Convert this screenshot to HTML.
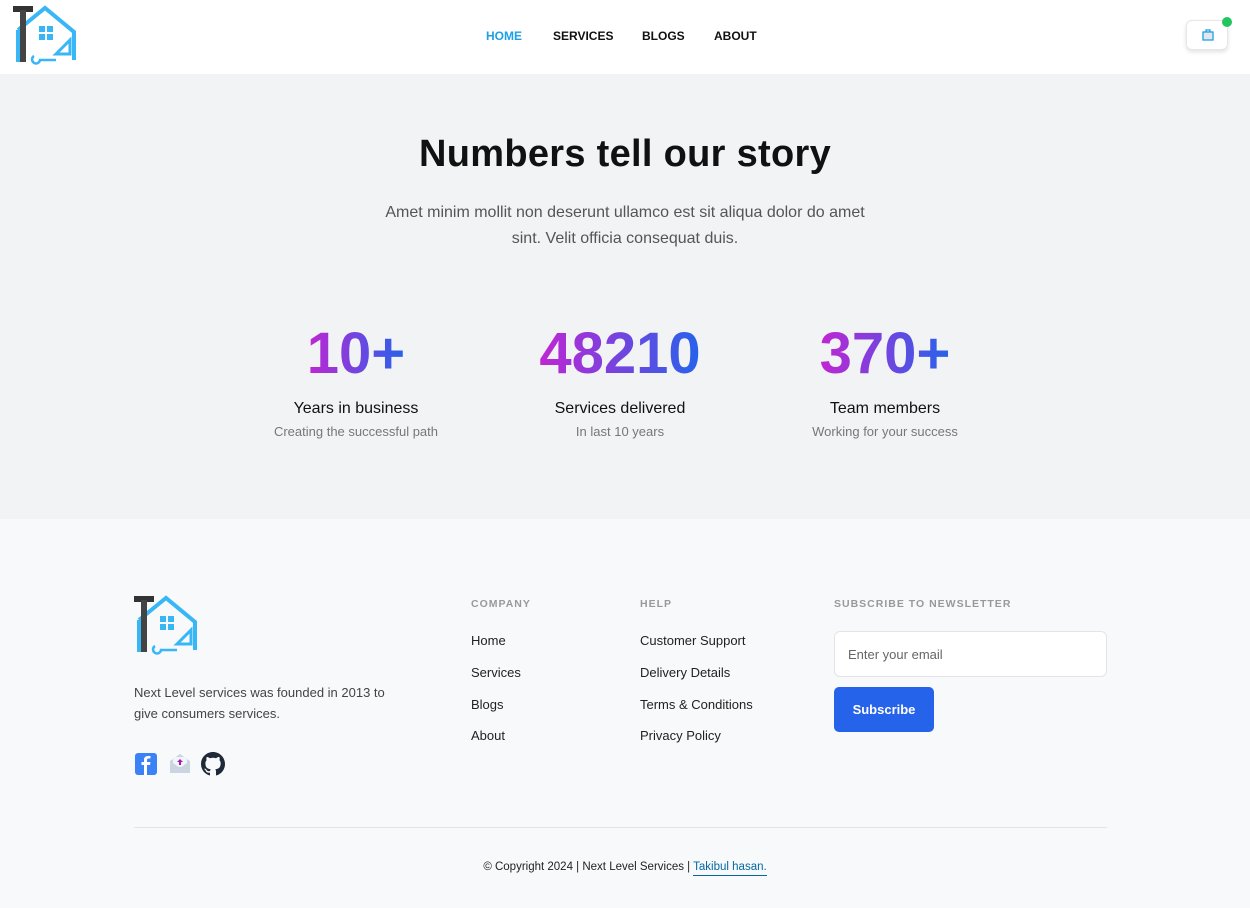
<!DOCTYPE html>
<html><head><meta charset="utf-8"><style>
*{margin:0;padding:0;box-sizing:border-box}
body{width:1250px;height:908px;overflow:hidden;font-family:"Liberation Sans",sans-serif;background:#f8f9fb;color:#111}
header{height:74px;background:#fff;position:relative}
nav{position:absolute;top:29px;left:486px;font-size:12px;font-weight:bold}
nav span{position:absolute;white-space:nowrap}
.cart{position:absolute;left:1186px;top:20px;width:42px;height:30px;border:1px solid #e5e7eb;border-radius:6px;background:#fff;box-shadow:0 2px 4px rgba(0,0,0,.12)}
.dot{position:absolute;left:1222px;top:17px;width:10px;height:10px;border-radius:50%;background:#22c55e}
.stats{position:absolute;top:74px;left:0;width:1250px;height:445px;background:#f2f3f5}
h1{position:absolute;top:133px;width:1250px;text-align:center;font-size:38px;font-weight:bold;letter-spacing:0.3px}
.sub{position:absolute;top:200px;left:370px;width:510px;text-align:center;font-size:16px;line-height:26px;color:#555}
.stat{position:absolute;top:322px;width:300px;text-align:center}
.num{display:inline-block;font-size:58px;font-weight:bold;background:linear-gradient(90deg,#c026d3,#2563eb);-webkit-background-clip:text;background-clip:text;color:transparent;line-height:64px}
.t{font-size:16px;margin-top:14px;color:#111}
.d{font-size:13px;color:#777;margin-top:6px}
.fh{position:absolute;top:598px;font-size:10.5px;font-weight:bold;color:#999;letter-spacing:1px}
.fl{position:absolute;font-size:13px;color:#222}
</style></head><body>
<header>
<svg style="position:absolute;left:12px;top:4px" width="66" height="62" viewBox="0 0 66 62">
<path d="M6 26 L33 4 L62 28 L62 56 M6 26 L6 58" fill="none" stroke="#38b6f5" stroke-width="4"/>
<rect x="1" y="2" width="20" height="6" fill="#333"/><rect x="8" y="6" width="6" height="52" fill="#444"/>
<rect x="27" y="22" width="6" height="6" fill="#38b6f5"/><rect x="35" y="22" width="6" height="6" fill="#38b6f5"/><rect x="27" y="30" width="6" height="6" fill="#38b6f5"/><rect x="35" y="30" width="6" height="6" fill="#38b6f5"/>
<path d="M44 50 L58 36 L58 50 Z" fill="none" stroke="#38b6f5" stroke-width="3"/>
<path d="M22 52 a4 4 0 1 0 6 4 L44 56" fill="none" stroke="#38b6f5" stroke-width="2.5"/>
</svg>
<nav><span style="left:0;color:#1ea0e6">HOME</span><span style="left:67px">SERVICES</span><span style="left:156px">BLOGS</span><span style="left:228px">ABOUT</span></nav>
<div class="cart"><svg style="position:absolute;left:15px;top:7px" width="12" height="13" viewBox="0 0 12 13"><rect x="1" y="4" width="10" height="8" fill="#e5e7eb" stroke="#1ea0e6" stroke-width="1.3"/><path d="M4 4 V2 H8 V4" fill="none" stroke="#1ea0e6" stroke-width="1.3"/></svg></div>
<div class="dot"></div>
</header>
<div class="stats"></div>
<h1>Numbers tell our story</h1>
<div class="sub">Amet minim mollit non deserunt ullamco est sit aliqua dolor do amet sint. Velit officia consequat duis.</div>
<div class="stat" style="left:206px"><div class="num">10+</div><div class="t">Years in business</div><div class="d">Creating the successful path</div></div>
<div class="stat" style="left:470px"><div class="num">48210</div><div class="t">Services delivered</div><div class="d">In last 10 years</div></div>
<div class="stat" style="left:735px"><div class="num">370+</div><div class="t">Team members</div><div class="d">Working for your success</div></div>

<svg style="position:absolute;left:133px;top:594px" width="66" height="62" viewBox="0 0 66 62">
<path d="M6 26 L33 4 L62 28 L62 56 M6 26 L6 58" fill="none" stroke="#38b6f5" stroke-width="4"/>
<rect x="1" y="2" width="20" height="6" fill="#333"/><rect x="8" y="6" width="6" height="52" fill="#444"/>
<rect x="27" y="22" width="6" height="6" fill="#38b6f5"/><rect x="35" y="22" width="6" height="6" fill="#38b6f5"/><rect x="27" y="30" width="6" height="6" fill="#38b6f5"/><rect x="35" y="30" width="6" height="6" fill="#38b6f5"/>
<path d="M44 50 L58 36 L58 50 Z" fill="none" stroke="#38b6f5" stroke-width="3"/>
<path d="M22 52 a4 4 0 1 0 6 4 L44 56" fill="none" stroke="#38b6f5" stroke-width="2.5"/>
</svg>
<div style="position:absolute;left:134px;top:682px;width:272px;font-size:13px;line-height:21px;color:#444">Next Level services was founded in 2013 to give consumers services.</div>
<svg style="position:absolute;left:135px;top:753px" width="22" height="22" viewBox="0 0 22 22"><rect width="22" height="22" rx="3" fill="#3b82f6"/><path d="M12 22 V12 H15 L15.5 9 H12 V7 Q12 5.5 13.5 5.5 H15.5 V3 H13 Q9 3 9 7 V9 H6.5 V12 H9 V22Z" fill="#fff"/></svg>
<svg style="position:absolute;left:169px;top:752px" width="22" height="22" viewBox="0 0 22 22"><path d="M1 9 L11 2 L21 9 V21 H1Z" fill="#cbd5e1"/><rect x="4" y="5" width="14" height="10" fill="#f1f5f9"/><path d="M11 7 L14 10 H12 V13 H10 V10 H8Z" fill="#a21caf"/><path d="M1 9 L11 16 L21 9 V21 H1Z" fill="#cbd5e1"/></svg>
<svg style="position:absolute;left:201px;top:752px" width="24" height="24" viewBox="0 0 16 16"><path fill="#1f2937" d="M8 0C3.580 0 0 3.580 0 8c0 3.540 2.290 6.530 5.470 7.590.4.07.55-.17.55-.38 0-.19-.01-.82-.01-1.490-2.010.37-2.530-.49-2.690-.94-.09-.23-.48-.94-.82-1.130-.28-.15-.68-.52-.01-.53.63-.01 1.080.58 1.230.82.72 1.210 1.870.87 2.330.66.07-.52.28-.87.51-1.070-1.780-.2-3.640-.89-3.640-3.950 0-.87.31-1.590.82-2.150-.08-.2-.36-1.020.08-2.120 0 0 .67-.21 2.200.82.64-.18 1.320-.27 2-.27s1.360.09 2 .27c1.530-1.040 2.200-.82 2.200-.82.44 1.100.16 1.920.08 2.120.51.56.82 1.270.82 2.150 0 3.070-1.870 3.750-3.650 3.950.29.25.54.73.54 1.480 0 1.070-.01 1.930-.01 2.200 0 .21.15.46.55.38A8.010 8.010 0 0016 8c0-4.420-3.580-8-8-8"/></svg>

<div class="fh" style="left:471px">COMPANY</div>
<div class="fl" style="left:471px;top:633px">Home</div><div class="fl" style="left:471px;top:665px">Services</div><div class="fl" style="left:471px;top:697px">Blogs</div><div class="fl" style="left:471px;top:728px">About</div>
<div class="fh" style="left:640px">HELP</div>
<div class="fl" style="left:640px;top:633px">Customer Support</div><div class="fl" style="left:640px;top:665px">Delivery Details</div><div class="fl" style="left:640px;top:697px">Terms &amp; Conditions</div><div class="fl" style="left:640px;top:728px">Privacy Policy</div>
<div class="fh" style="left:834px">SUBSCRIBE TO NEWSLETTER</div>
<div style="position:absolute;left:834px;top:631px;width:273px;height:46px;border:1px solid #e2e4e8;border-radius:6px;background:#fff;font-size:13px;color:#666;padding:15px 13px">Enter your email</div>
<div style="position:absolute;left:834px;top:687px;width:100px;height:45px;background:#2563eb;border-radius:5px;color:#fff;font-size:13px;font-weight:bold;text-align:center;line-height:45px">Subscribe</div>
<div style="position:absolute;left:134px;top:827px;width:973px;height:1px;background:#e2e4e8"></div>
<div style="position:absolute;left:0;top:861px;width:1250px;text-align:center;font-size:11.5px;color:#222">© Copyright 2024 | Next Level Services | <span style="color:#0369a1;border-bottom:1px solid #0369a1;padding-bottom:2px">Takibul hasan.</span></div>
</body></html>
